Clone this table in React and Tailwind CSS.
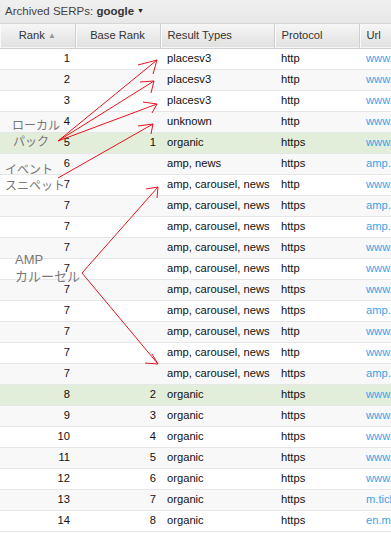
import React from "react";

const rows = [
  { rank: 1, base: "", type: "placesv3", proto: "http", url: "www.example.com/" },
  { rank: 2, base: "", type: "placesv3", proto: "http", url: "www.example.com/" },
  { rank: 3, base: "", type: "placesv3", proto: "http", url: "www.example.com/" },
  { rank: 4, base: "", type: "unknown", proto: "http", url: "www.example.com/" },
  { rank: 5, base: "1", type: "organic", proto: "https", url: "www.example.com/", hit: true },
  { rank: 6, base: "", type: "amp, news", proto: "https", url: "amp.example.com/" },
  { rank: 7, base: "", type: "amp, carousel, news", proto: "http", url: "www.example.com/" },
  { rank: 7, base: "", type: "amp, carousel, news", proto: "https", url: "amp.example.com/" },
  { rank: 7, base: "", type: "amp, carousel, news", proto: "https", url: "amp.example.com/" },
  { rank: 7, base: "", type: "amp, carousel, news", proto: "https", url: "www.example.com/" },
  { rank: 7, base: "", type: "amp, carousel, news", proto: "http", url: "www.example.com/" },
  { rank: 7, base: "", type: "amp, carousel, news", proto: "https", url: "www.example.com/" },
  { rank: 7, base: "", type: "amp, carousel, news", proto: "https", url: "amp.example.com/" },
  { rank: 7, base: "", type: "amp, carousel, news", proto: "http", url: "www.example.com/" },
  { rank: 7, base: "", type: "amp, carousel, news", proto: "http", url: "www.example.com/" },
  { rank: 7, base: "", type: "amp, carousel, news", proto: "https", url: "amp.example.com/" },
  { rank: 8, base: "2", type: "organic", proto: "https", url: "www.example.com/", hit: true },
  { rank: 9, base: "3", type: "organic", proto: "https", url: "www.example.com/" },
  { rank: 10, base: "4", type: "organic", proto: "https", url: "www.example.com/" },
  { rank: 11, base: "5", type: "organic", proto: "https", url: "www.example.com/" },
  { rank: 12, base: "6", type: "organic", proto: "https", url: "www.example.com/" },
  { rank: 13, base: "7", type: "organic", proto: "https", url: "m.ticket.example.com/" },
  { rank: 14, base: "8", type: "organic", proto: "https", url: "en.m.example.org/" },
];

// arrow: [fromX, fromY, toX, toY, head1X, head1Y, head2X, head2Y]
const arrows = [
  [58, 141, 157, 60, 138, 65, 153, 74],
  [58, 141, 154, 81, 140, 82, 151, 93],
  [58, 141, 157, 104, 143, 102, 152, 113],
  [58, 178, 153, 124, 138, 126, 151, 134],
  [82, 273, 158, 187, 146, 189, 157, 198],
  [82, 273, 158, 364, 145, 363, 152, 354],
];

const Header = ({ children, className = "" }) => (
  <th
    className={
      "h-[24px] p-0 font-normal text-[11.2px] text-[#333] border-r border-[#cfcfcf] shadow-[inset_1px_0_0_#fafafa] " +
      className
    }
  >
    {children}
  </th>
);

export default function App() {
  return (
    <div
      className="relative w-[391px] h-[533px] overflow-hidden bg-white"
      style={{ fontFamily: '"Liberation Sans", Arial, sans-serif' }}
    >
      <div className="h-[24px] flex items-center pl-[5px] bg-gradient-to-b from-[#f0f0f0] to-[#e8e8e8] border-b border-[#d6d6d6] text-[11.5px] text-[#444]">
        Archived SERPs:&nbsp;<span className="font-bold text-[#333]">google</span>
        <span className="ml-[3px] text-[7px] text-[#222]">▼</span>
      </div>

      <table className="table-fixed border-collapse w-[440px]">
        <colgroup>
          <col className="w-[75px]" />
          <col className="w-[85px]" />
          <col className="w-[114px]" />
          <col className="w-[85px]" />
          <col className="w-[81px]" />
        </colgroup>
        <thead>
          <tr className="bg-gradient-to-b from-[#f6f6f6] to-[#e1e1e1] border-b border-[#cfcfcf]">
            <Header className="text-center">
              Rank <span className="text-[8px] text-[#999] relative top-[-1px]">▲</span>
            </Header>
            <Header className="text-center">Base Rank</Header>
            <Header className="text-left pl-[7px]">Result Types</Header>
            <Header className="text-left pl-[7px]">Protocol</Header>
            <Header className="text-left pl-[7px] border-r-0">Url</Header>
          </tr>
        </thead>
        <tbody>
          {rows.map((r, i) => (
            <tr
              key={i}
              className={
                "h-[21px] border-b border-[#e6e6e6] text-[11.2px] text-[#111] " +
                (r.hit ? "bg-[#e2eed9]" : i % 2 ? "bg-[#f8f8f8]" : "bg-white")
              }
            >
              <td className="p-0 pr-[5px] text-right">{r.rank}</td>
              <td className="p-0 pr-[4px] text-right">{r.base}</td>
              <td className="p-0 pl-[7px] whitespace-nowrap">{r.type}</td>
              <td className="p-0 pl-[7px]">{r.proto}</td>
              <td className="p-0 pl-[7px] whitespace-nowrap text-[#3ba3ea]">{r.url}</td>
            </tr>
          ))}
        </tbody>
      </table>

      <div
        className="absolute left-[12px] top-[117px] text-[12px] leading-[16px] text-[#777]"
        style={{ fontFamily: '"Noto Sans CJK JP", sans-serif' }}
      >
        ローカル
        <div className="pl-[1px]">パック</div>
      </div>
      <div
        className="absolute left-[5px] top-[161px] text-[12px] leading-[16px] text-[#777]"
        style={{ fontFamily: '"Noto Sans CJK JP", sans-serif' }}
      >
        イベント
        <div>スニペット</div>
      </div>
      <div
        className="absolute left-[15px] top-[252px] text-[12px] leading-[16px] text-[#777]"
        style={{ fontFamily: '"Noto Sans CJK JP", sans-serif' }}
      >
        <div className="text-[13px]" style={{ fontFamily: '"Liberation Sans", sans-serif' }}>AMP</div>
        <div className="text-[13px]">カルーセル</div>
      </div>

      <svg className="absolute inset-0 pointer-events-none" width="391" height="533">
        {arrows.map((a, i) => (
          <g key={i} stroke="#e8141c" strokeWidth="1" fill="none">
            <line x1={a[0]} y1={a[1]} x2={a[2]} y2={a[3]} />
            <line x1={a[2]} y1={a[3]} x2={a[4]} y2={a[5]} />
            <line x1={a[2]} y1={a[3]} x2={a[6]} y2={a[7]} />
          </g>
        ))}
      </svg>
    </div>
  );
}
